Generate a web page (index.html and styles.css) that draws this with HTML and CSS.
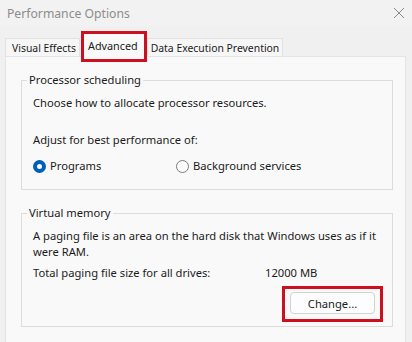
FILE: index.html
```html
<!DOCTYPE html>
<html lang="en">
<head>
    <meta charset="UTF-8">
    <title>Performance Options</title>
    <link rel="stylesheet" href="styles.css">
</head>
<body>
    <div class="window">
        <div class="titlebar">
            <span class="title">Performance Options</span>
            <svg class="close" width="12" height="12" viewBox="0 0 12 12">
                <path d="M1 1 L11 11 M11 1 L1 11" stroke="#8a8a8a" stroke-width="1" fill="none"/>
            </svg>
        </div>

        <div class="tabs">
            <div class="tab first">Visual Effects</div>
            <div class="tab active">Advanced</div>
            <div class="tab">Data Execution Prevention</div>
        </div>

        <div class="panel">
            <fieldset class="group">
                <legend>Processor scheduling</legend>
                <div class="group-body">
                    <p class="line first">Choose how to allocate processor resources.</p>
                    <p class="line adjust">Adjust for best performance of:</p>
                    <div class="radios">
                        <label class="radio checked"><span class="dot"></span>Programs</label>
                        <label class="radio"><span class="dot"></span>Background services</label>
                    </div>
                </div>
            </fieldset>

            <fieldset class="group vm">
                <legend>Virtual memory</legend>
                <div class="group-body">
                    <p class="line first">A paging file is an area on the hard disk that Windows uses as if it were RAM.</p>
                    <div class="size-row">
                        <span class="size-label">Total paging file size for all drives:</span>
                        <span>12000 MB</span>
                    </div>
                    <div class="actions">
                        <div class="highlight">
                            <button class="btn">Change...</button>
                        </div>
                    </div>
                </div>
            </fieldset>
        </div>
    </div>
</body>
</html>
```

FILE: styles.css
```css
body {
    margin: 0;
    background: #f0f0f0;
    font-family: "Noto Sans", "Open Sans", sans-serif;
    font-size: 11.2px;
    color: #1b1b1b;
}
.window {
    width: 412px;
    height: 342px;
    overflow: hidden;
}
.titlebar {
    height: 26px;
    display: flex;
    align-items: center;
    justify-content: space-between;
    padding: 0 7px 0 7px;
    background: #f2f2f2;
}
.title {
    color: #8c8c8c;
    font-size: 12.2px;
    margin-top: 1px;
}
.tabs {
    display: flex;
    align-items: flex-end;
    height: 30px;
    padding-left: 5px;
    position: relative;
    z-index: 1;
    font-size: 10.4px;
}
.tab {
    height: 18px;
    line-height: 18px;
    padding: 0 3px;
    background: #f6f6f6;
    border: 1px solid #e2e2e2;
    border-bottom: none;
    box-sizing: border-box;
    white-space: nowrap;
}
.tab.first {
    padding: 0 3px 0 6px;
}
.tab.active {
    height: 31px;
    margin-bottom: -6px;
    margin-left: 1px;
    padding: 0 6px 0 4px;
    line-height: 24px;
    font-size: 10.8px;
    border: 3px solid #cc1020;
    background: #f9f9f9;
}
.panel {
    margin: 0 6px 0 5px;
    background: #f9f9f9;
    border: 1px solid #e4e4e4;
    padding: 15px 12px 20px 15px;
}
.group {
    margin: 0;
    padding: 0 0 15px 0;
    border: 1px solid #dcdcdc;
    min-width: 0;
}
.group legend {
    margin-left: 5px;
    padding: 0 2px;
    line-height: 16px;
}
.group.vm {
    margin-top: 15px;
    padding-bottom: 4px;
}
.group-body {
    padding: 0 8px 0 11px;
}
.line {
    margin: 0;
    line-height: 16px;
}
.line.first {
    margin-top: 7px;
}
.line.adjust {
    margin-top: 21px;
}
.radios {
    display: flex;
    margin-top: 10px;
    line-height: 16px;
}
.radio {
    display: flex;
    align-items: center;
    width: 143px;
}
.dot {
    width: 11px;
    height: 11px;
    border-radius: 50%;
    border: 1px solid #7a7a7a;
    background: #fbfbfb;
    margin-right: 4px;
    box-sizing: content-box;
}
.radio.checked .dot {
    width: 5px;
    height: 5px;
    border: 4px solid #005fb8;
    background: #ffffff;
}
.size-row {
    display: flex;
    margin-top: 5px;
    line-height: 16px;
}
.size-label {
    width: 232px;
}
.actions {
    display: flex;
    justify-content: flex-end;
    margin-top: 5px;
    padding-right: 1px;
}
.highlight {
    border: 3px solid #cc1020;
    padding: 3px 5px 5px 5px;
}
.btn {
    display: block;
    width: 85px;
    height: 22px;
    background: #fdfdfd;
    border: 1px solid #d2d2d2;
    border-radius: 4px;
    font-family: inherit;
    font-size: 11.2px;
    color: #1b1b1b;
    padding: 0;
}
```
